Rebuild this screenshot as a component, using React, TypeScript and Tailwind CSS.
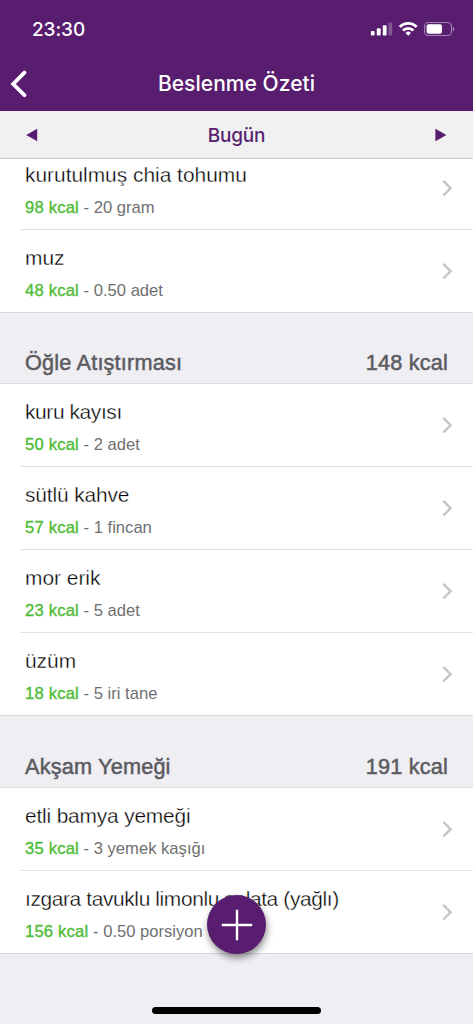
type FoodItem = {
  name: string;
  kcal: string;
  amount: string;
  tracking?: string;
};

type Meal = {
  title?: string;
  total?: string;
  items: FoodItem[];
};

const meals: Meal[] = [
  {
    items: [
      { name: 'kurutulmuş chia tohumu', kcal: '98 kcal', amount: '20 gram' },
      { name: 'muz', kcal: '48 kcal', amount: '0.50 adet' },
    ],
  },
  {
    title: 'Öğle Atıştırması',
    total: '148 kcal',
    items: [
      { name: 'kuru kayısı', kcal: '50 kcal', amount: '2 adet', tracking: 'tracking-[-0.38px]' },
      { name: 'sütlü kahve', kcal: '57 kcal', amount: '1 fincan', tracking: 'tracking-[-0.12px]' },
      { name: 'mor erik', kcal: '23 kcal', amount: '5 adet' },
      { name: 'üzüm', kcal: '18 kcal', amount: '5 iri tane' },
    ],
  },
  {
    title: 'Akşam Yemeği',
    total: '191 kcal',
    items: [
      { name: 'etli bamya yemeği', kcal: '35 kcal', amount: '3 yemek kaşığı', tracking: 'tracking-[-0.17px]' },
      { name: 'ızgara tavuklu limonlu salata (yağlı)', kcal: '156 kcal', amount: '0.50 porsiyon', tracking: 'tracking-[-0.37px]' },
    ],
  },
];

function StatusIcons() {
  return (
    <svg width="86" height="16" viewBox="0 0 86 16" fill="#fff">
      {/* Signal */}
      <rect x="0.8" y="10" width="3.8" height="4.6" rx="1" />
      <rect x="6.8" y="7.2" width="3.8" height="7.4" rx="1" />
      <rect x="12.8" y="4.2" width="3.8" height="10.4" rx="1" />
      <rect x="18.4" y="1.6" width="3.8" height="13" rx="1" opacity="0.25" />
      {/* Wifi */}
      <g fill="none" stroke="#fff" strokeWidth="2.8">
        <path d="M29.8 6a11.6 11.6 0 0 1 16.8 0" />
        <path d="M33 9.6a7.3 7.3 0 0 1 10.4 0" />
      </g>
      <path d="M38.2 14.7l-2.7-2.8a3.9 3.9 0 0 1 5.4 0z" />
      {/* Battery */}
      <rect x="54.6" y="1.5" width="26.8" height="13" rx="3.6" fill="none" stroke="#fff" strokeWidth="1.1" opacity="0.45" />
      <rect x="56.6" y="3.3" width="15.4" height="9.4" rx="2" />
      <path d="M82.8 5.7c1.8.7 1.8 4 0 4.6z" opacity="0.5" />
    </svg>
  );
}

function Header() {
  return (
    <header className="bg-[#591d70] text-white h-[111px] shrink-0 flex flex-col font-['Inter',sans-serif]">
      <div className="h-14 flex items-center justify-between pl-8 pr-[17px] pt-[2px]">
        <span className="text-[19px] font-medium leading-6 tracking-[-0.1px] pt-[2px]">23:30</span>
        <StatusIcons />
      </div>
      <div className="h-[55px] grid grid-cols-[60px_1fr_60px] items-center">
        <button className="pl-[9px]" aria-label="Geri">
          <svg width="18" height="28" viewBox="0 0 18 28" fill="none" stroke="#fff" strokeWidth="3.8" strokeLinecap="round">
            <path d="M15.4 2.6L4.2 14l11.2 11.2" />
          </svg>
        </button>
        <h1 className="text-center text-[21px] font-medium leading-7 tracking-[0.05px] whitespace-nowrap">Beslenme Özeti</h1>
      </div>
    </header>
  );
}

function DateBar() {
  return (
    <div className="bg-[#f1f1f1] border-b border-[#c8c8ca] h-12 shrink-0 flex items-center justify-between px-[26px] text-[#591d70] font-['Inter',sans-serif]">
      <button aria-label="Önceki gün">
        <svg width="12" height="14" viewBox="0 0 12 14" fill="currentColor"><path d="M11.2 0.8v12.4L0.2 7z" /></svg>
      </button>
      <span className="text-[19px] font-medium leading-6 tracking-[-0.2px] pt-[2px]">Bugün</span>
      <button aria-label="Sonraki gün">
        <svg width="12" height="14" viewBox="0 0 12 14" fill="currentColor"><path d="M0.4 0.8v12.4L11.4 7z" /></svg>
      </button>
    </div>
  );
}

function FoodRow({ item, last }: { item: FoodItem; last: boolean }) {
  return (
    <li className={`bg-white h-[83px] ${last ? 'border-b border-[#d8d8dc]' : 'pl-5'}`}>
      <div className={`h-full flex items-center justify-between pr-[20px] ${last ? 'pl-[25px]' : 'pl-[5px] border-b border-[#e0e0e2]'}`}>
        <div className="whitespace-nowrap pt-[4px]">
          <p className={`text-[20.9px] leading-7 text-black [-webkit-text-stroke:0.35px_#fff] ${item.tracking ?? ''}`}>{item.name}</p>
          <p className="mt-[7px] text-[16.6px] leading-6 text-[#6f6f6f]">
            <span className="text-[#51bd3a] tracking-[0.2px] [-webkit-text-stroke:0.4px_#51bd3a]">{item.kcal}</span> - {item.amount}
          </p>
        </div>
        <svg width="11" height="17" viewBox="0 0 11 17" fill="none" stroke="#c5c5c9" strokeWidth="2.4">
          <path d="M1.3 0.9l7.3 7.3-7.3 7.3" />
        </svg>
      </div>
    </li>
  );
}

function MealSection({ meal }: { meal: Meal }) {
  return (
    <section>
      {meal.title && (
        <div className="h-[71px] border-b border-[#dcdce0] flex items-end justify-between px-[25px] pb-[6px] text-[21.7px] leading-7 tracking-[0.18px] text-[#5b5b60] [-webkit-text-stroke:0.5px_#5b5b60]">
          <h2>{meal.title}</h2>
          <span>{meal.total}</span>
        </div>
      )}
      <ul>
        {meal.items.map((item, i) => (
          <FoodRow key={item.name} item={item} last={i === meal.items.length - 1} />
        ))}
      </ul>
    </section>
  );
}

export default function App() {
  return (
    <div className="relative w-[473px] h-[1024px] overflow-hidden bg-[#efeef3] flex flex-col font-['Liberation_Sans',sans-serif]">
      <Header />
      <DateBar />
      <main className="flex-1 min-h-0 overflow-hidden">
        {/* List is scrolled a little under the date bar */}
        <div className="-mt-3 [&>section:last-child]:mt-px">
          {meals.map((meal, i) => (
            <MealSection key={i} meal={meal} />
          ))}
        </div>
      </main>

      <button className="absolute left-[207px] top-[895px] size-[59px] rounded-full bg-[#591d70] flex items-center justify-center shadow-[1px_4px_7px_rgba(0,0,0,0.45)]" aria-label="Ekle">
        <svg width="32" height="32" viewBox="0 0 32 32" stroke="#fff" strokeWidth="2.4">
          <path d="M16 0.8v30.4M0.8 16h30.4" />
        </svg>
      </button>

      {/* Home indicator */}
      <div className="absolute left-[152px] top-[1007px] w-[169px] h-[7px] rounded-full bg-black" />
    </div>
  );
}
